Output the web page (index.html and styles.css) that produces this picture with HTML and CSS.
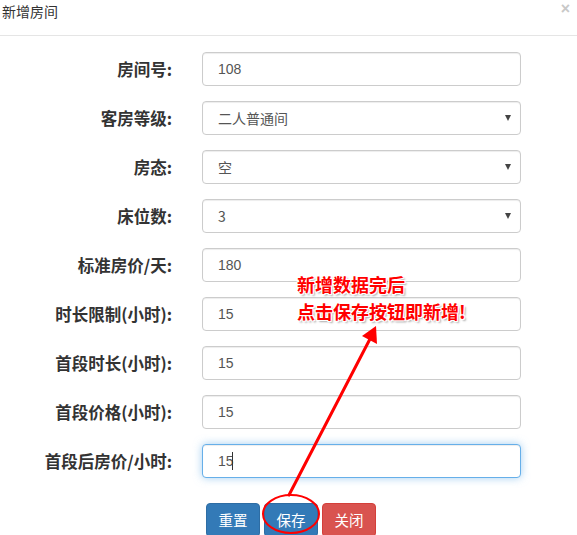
FILE: index.html
```html
<!DOCTYPE html>
<html lang="zh-CN">
<head>
<meta charset="utf-8">
<title>新增房间</title>
<link rel="stylesheet" href="styles.css">
</head>
<body>
<div class="modal">
  <div class="modal-header">
    <h4 class="modal-title">新增房间</h4>
    <span class="close">×</span>
  </div>
  <div class="modal-body">
    <form class="form">
      <div class="form-row">
        <label>房间号:</label>
        <input class="control" type="text" value="108">
      </div>
      <div class="form-row">
        <label>客房等级:</label>
        <div class="select"><span>二人普通间</span><i class="caret"></i></div>
      </div>
      <div class="form-row">
        <label>房态:</label>
        <div class="select"><span>空</span><i class="caret"></i></div>
      </div>
      <div class="form-row">
        <label>床位数:</label>
        <div class="select"><span>3</span><i class="caret"></i></div>
      </div>
      <div class="form-row">
        <label>标准房价/天:</label>
        <input class="control" type="text" value="180">
      </div>
      <div class="form-row">
        <label>时长限制(小时):</label>
        <input class="control" type="text" value="15">
      </div>
      <div class="form-row">
        <label>首段时长(小时):</label>
        <input class="control" type="text" value="15">
      </div>
      <div class="form-row">
        <label>首段价格(小时):</label>
        <input class="control" type="text" value="15">
      </div>
      <div class="form-row">
        <label>首段后房价/小时:</label>
        <div class="focus-wrap">
          <input class="control focused" type="text" value="15">
          <span class="text-caret"></span>
        </div>
      </div>
      <div class="actions">
        <button type="button" class="btn btn-primary">重置</button>
        <button type="button" class="btn btn-primary">保存</button>
        <button type="button" class="btn btn-danger">关闭</button>
      </div>
    </form>
  </div>
</div>

<div class="note">新增数据完后<br>点击保存按钮即新增!</div>
<svg class="overlay" width="577" height="535" viewBox="0 0 577 535">
  <line x1="289" y1="495" x2="371" y2="337" stroke="#ff0000" stroke-width="3" stroke-linecap="round"/>
  <polygon points="376,326 377,344 362,336" fill="#ff0000"/>
  <ellipse cx="291" cy="514" rx="28" ry="19" fill="none" stroke="#ff0000" stroke-width="2"/>
</svg>
</body>
</html>
```

FILE: styles.css
```css
html, body {
  margin: 0;
  padding: 0;
  background: #fff;
}
body {
  width: 577px;
  height: 535px;
  overflow: hidden;
  position: relative;
  font-family: "Liberation Sans", "Noto Sans CJK SC", sans-serif;
  font-size: 14px;
  color: #333;
}
.modal-header {
  height: 35px;
  border-bottom: 1px solid #e5e5e5;
  padding: 0 2px;
  display: flex;
  justify-content: space-between;
  align-items: flex-start;
  box-sizing: content-box;
}
.modal-title {
  margin: 0;
  font-size: 14px;
  font-weight: normal;
  line-height: 24px;
  color: #333;
}
.close {
  font-size: 16px;
  line-height: 18px;
  padding-top: 0;
  color: #c8c8c8;
  font-weight: bold;
  margin-right: 5px;
}
.modal-body {
  padding-top: 16px;
}
.form-row {
  display: grid;
  grid-template-columns: 172px 319px;
  column-gap: 30px;
  align-items: center;
  margin-bottom: 15px;
}
.form-row label {
  text-align: right;
  font-family: "Noto Sans CJK SC", "Liberation Sans", sans-serif;
  font-weight: bold;
  font-size: 16.5px;
  color: #333;
  white-space: nowrap;
}
.control {
  box-sizing: border-box;
  width: 319px;
  height: 34px;
  margin: 0;
  padding: 6px 15px;
  border: 1px solid #ccc;
  border-radius: 4px;
  font-family: "Liberation Sans", "Noto Sans CJK SC", sans-serif;
  font-size: 14px;
  color: #555;
  background: #fff;
  box-shadow: inset 0 1px 1px rgba(0,0,0,.075);
  outline: none;
}
.select {
  box-sizing: border-box;
  width: 319px;
  height: 34px;
  padding: 0 9px 0 15px;
  border: 1px solid #ccc;
  border-radius: 4px;
  box-shadow: inset 0 1px 1px rgba(0,0,0,.075);
  display: flex;
  align-items: center;
  justify-content: space-between;
  font-family: "Noto Sans CJK SC", "Liberation Sans", sans-serif;
  font-size: 14px;
  color: #555;
}
.caret {
  width: 0;
  height: 0;
  border-left: 3.5px solid transparent;
  border-right: 3.5px solid transparent;
  border-top: 6px solid #444;
}
.focus-wrap {
  position: relative;
  width: 319px;
  height: 34px;
}
.control.focused {
  border-color: #66afe9;
  box-shadow: inset 0 1px 1px rgba(0,0,0,.075), 0 0 8px rgba(102,175,233,.6);
}
.text-caret {
  position: absolute;
  left: 30px;
  top: 8px;
  width: 1px;
  height: 18px;
  background: #333;
}
.actions {
  padding-left: 206px;
  padding-top: 10px;
  display: flex;
  gap: 4px;
}
.btn {
  box-sizing: border-box;
  height: 34px;
  padding: 6px 0;
  border: 1px solid transparent;
  border-radius: 4px;
  font-family: "Noto Sans CJK SC", "Liberation Sans", sans-serif;
  font-size: 14.5px;
  line-height: 20px;
  color: #fff;
  width: 54px;
  text-align: center;
}
.btn-primary {
  background: #337ab7;
  border-color: #2e6da4;
}
.btn-danger {
  background: #d9534f;
  border-color: #d43f3a;
}
.note {
  position: absolute;
  left: 297px;
  top: 271px;
  font-family: "Noto Sans CJK SC", sans-serif;
  font-weight: bold;
  font-size: 18px;
  line-height: 27px;
  color: #ff0000;
  text-shadow: 1px 1px 0 #fff, -1px -1px 0 #fff, 1px -1px 0 #fff, -1px 1px 0 #fff, 2px 2px 2px rgba(0,0,0,.35);
  white-space: nowrap;
}
.overlay {
  position: absolute;
  left: 0;
  top: 0;
  pointer-events: none;
}
```
